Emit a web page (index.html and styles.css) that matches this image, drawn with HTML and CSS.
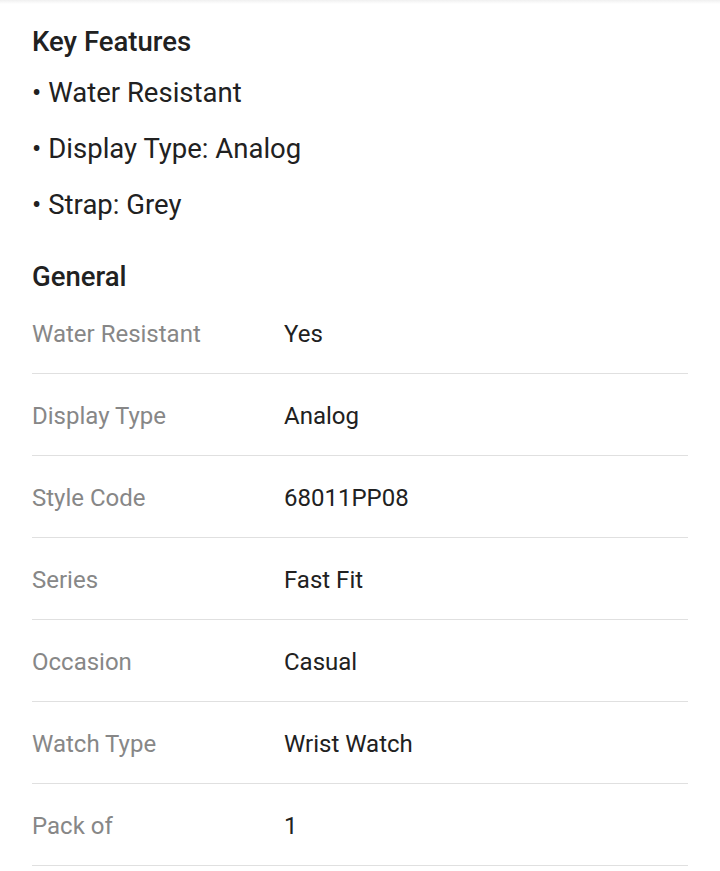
FILE: index.html
```html
<!DOCTYPE html>
<html lang="en">
<head>
<meta charset="utf-8">
<link rel="stylesheet" href="styles.css">
</head>
<body>
<div class="topshade"></div>
<main class="specs">
  <h2 class="title">Key Features</h2>
  <ul class="features">
    <li>Water Resistant</li>
    <li>Display Type: Analog</li>
    <li>Strap: Grey</li>
  </ul>
  <h2 class="title general">General</h2>
  <div class="table">
    <div class="row"><span class="label">Water Resistant</span><span class="value">Yes</span></div>
    <div class="row"><span class="label">Display Type</span><span class="value">Analog</span></div>
    <div class="row"><span class="label">Style Code</span><span class="value">68011PP08</span></div>
    <div class="row"><span class="label">Series</span><span class="value">Fast Fit</span></div>
    <div class="row"><span class="label">Occasion</span><span class="value">Casual</span></div>
    <div class="row"><span class="label">Watch Type</span><span class="value">Wrist Watch</span></div>
    <div class="row"><span class="label">Pack of</span><span class="value">1</span></div>
  </div>
</main>
</body>
</html>
```
FILE: styles.css
```css
html, body {
  margin: 0;
  padding: 0;
  background: #ffffff;
}
body {
  font-family: Roboto, "Noto Sans", sans-serif;
  color: #212121;
  height: 871px;
  overflow: hidden;
}
.topshade {
  height: 4px;
  background: linear-gradient(#f0f0f0, #ffffff);
}
.specs {
  padding: 19px 32px 0 32px;
}
.title {
  margin: 0;
  font-size: 27.5px;
  font-weight: 500;
  line-height: 38px;
  color: #212121;
}
.features {
  list-style: none;
  margin: 4px 0 0 0;
  padding: 0;
}
.features li {
  font-size: 27.5px;
  line-height: 56px;
  color: #212121;
}
.features li::before {
  content: "\2022";
  margin-right: 7px;
}
.general {
  margin-top: 26px;
  line-height: 36px;
  margin-bottom: -3px;
}
.row {
  display: flex;
  padding: 27px 0 24px 0;
  line-height: 30px;
  border-bottom: 1px solid #e0e0e0;
  font-size: 24px;
}
.label {
  width: 252px;
  flex: none;
  color: #878787;
}
.value {
  color: #212121;
}
```
